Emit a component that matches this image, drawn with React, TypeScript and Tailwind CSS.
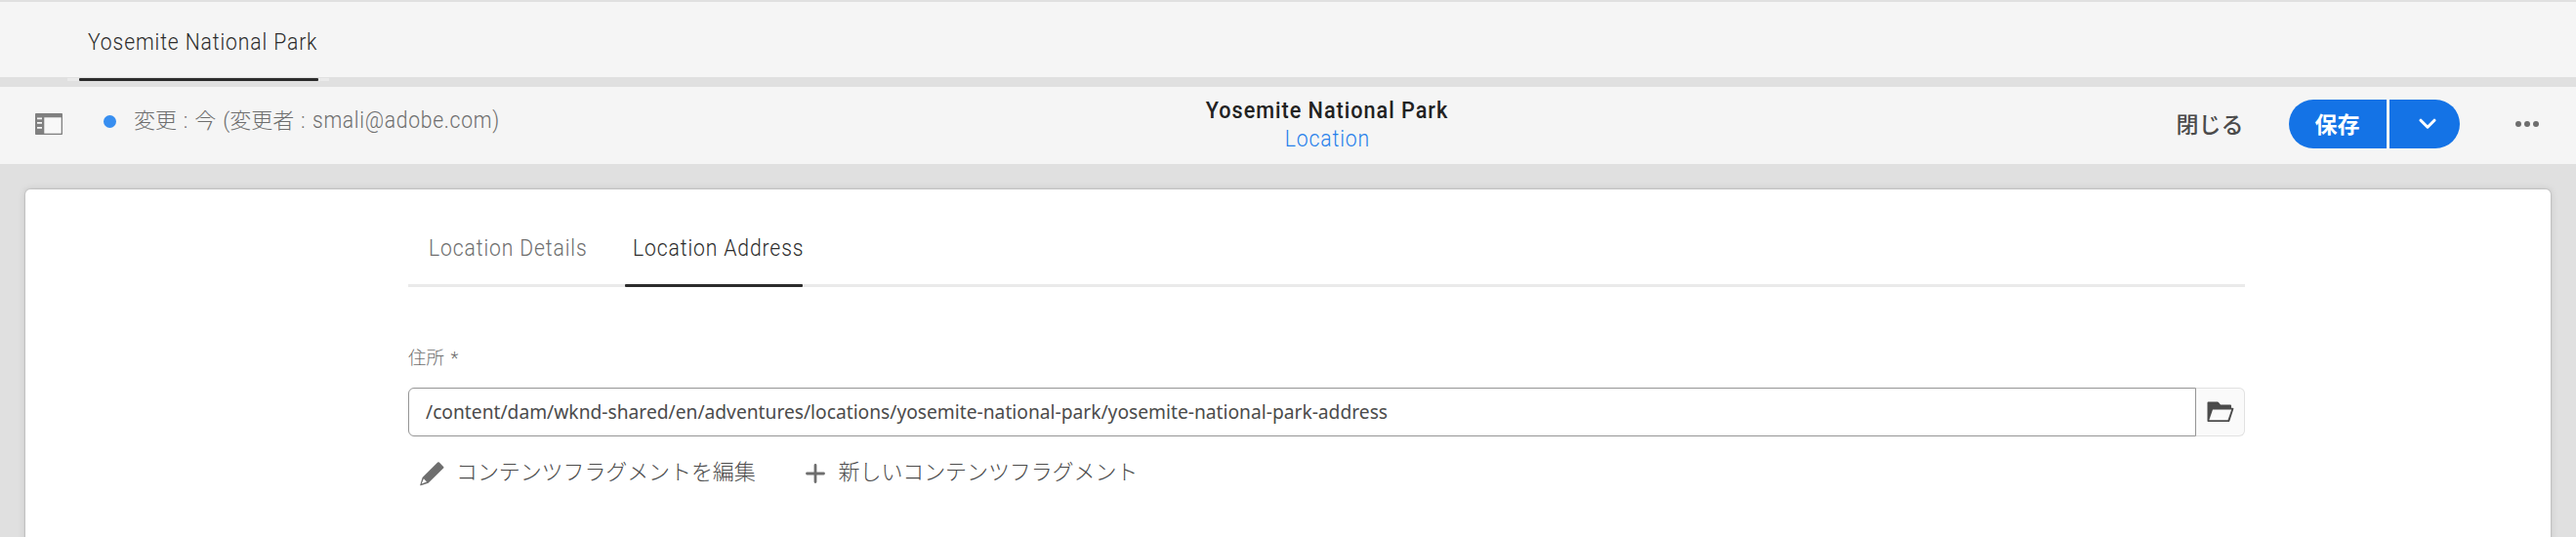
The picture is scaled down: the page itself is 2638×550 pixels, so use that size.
import type { ReactNode } from "react";

const light = "font-['Roboto','Noto_Sans_CJK_JP',sans-serif] font-light whitespace-nowrap";
const condensed = "inline-block origin-left scale-x-[0.88] tracking-[1px]";

function PanelIcon() {
  return (
    <svg width="28" height="22" viewBox="0 0 28 22" className="block">
      <rect x="0" y="0" width="28" height="22" rx="0.8" fill="#808080" />
      <rect x="9.3" y="4.3" width="17.4" height="16.4" fill="#f8f8f8" />
      <path d="M2 5.3h5M2 9.8h5M2 14.8h5" stroke="#f5f5f5" strokeWidth="1.7" />
    </svg>
  );
}

function FolderIcon() {
  return (
    <svg width="28" height="22" viewBox="0 0 28 22" className="block">
      <path
        d="M.5 20.3V1.6Q.5.6 1.5.6h9.3q.8 0 1.3.6l1.9 2.3h10q1 0 1 1v2.300h1.4q1.3 0 .9 1.2l-4 12.2q-.3.9-1.2.9H1.3q-.8 0-.8-.8z"
        fill="#4b4b4b"
      />
      <path d="M6 8.4h19.2l-3.7 10.900H2.300z" fill="#fafafa" />
    </svg>
  );
}

function PencilIcon() {
  return (
    <svg width="25" height="25" viewBox="0 0 25 25" className="block">
      <path
        d="M18.2.6q.8-.8 1.6 0l4.3 4.3q.8.8 0 1.6L8.6 21.7 1 24.3q-.9.2-.7-.7l2.3-7.600zM3.900 17.300l-2.200 5.300 5.300-2.200z"
        fillRule="evenodd"
        fill="#6e6e6e"
      />
    </svg>
  );
}

function PlusIcon() {
  return (
    <svg width="20" height="20" viewBox="0 0 20 20" className="block">
      <path d="M10 1.5v17M1.5 10h17" stroke="#6e6e6e" strokeWidth="2.8" strokeLinecap="round" />
    </svg>
  );
}

function Action({ icon, children }: { icon: ReactNode; children: ReactNode }) {
  return (
    <button className="flex items-center">
      {icon}
      <span className={`${light} text-[22px] leading-[30px] tracking-[-0.1px] text-[#4b4b4b]`}>{children}</span>
    </button>
  );
}

export default function App() {
  return (
    <div className="flex h-[550px] w-[2638px] flex-col overflow-hidden bg-[#e0e0e0]">
      <nav className="mt-[2px] flex h-[81px] shrink-0 flex-col">
        <div className="flex h-[77px] bg-[#f5f5f5] pl-[90px] pt-[24px]">
          <span className={`${light} ${condensed} text-[24px] leading-[34px] text-[#2c2c2c]`}>
            Yosemite National Park
          </span>
        </div>
        <div className="ml-[69px] mt-px flex h-[3px] w-[268px] bg-[#eaeaea] pl-[12px]">
          <div className="h-[3px] w-[245px] rounded-[1px] bg-[#2c2c2c]" />
        </div>
      </nav>

      <header className="mt-[6px] grid h-[79px] shrink-0 grid-cols-3 bg-[#f5f5f5]">
        <div className="flex pl-[36px]">
          <div className="pt-[27px]">
            <PanelIcon />
          </div>
          <div className="ml-[42px] mt-[29px] size-[13px] rounded-full bg-[#378ef0]" />
          <span className={`${light} ml-[18px] mt-[17px] text-[22px] leading-[34px] text-[#6e6e6e] [word-spacing:1.5px]`}>
            変更 : 今 (変更者 :{" "}
            <span className="inline-block origin-left scale-x-[0.88] text-[24px] tracking-[0.8px]">smali@adobe.com)</span>
          </span>
        </div>
        <div className="flex flex-col items-center pl-[79px] pt-[10px]">
          <h1 className="scale-x-[0.9] whitespace-nowrap font-['Roboto',sans-serif] text-[24px] font-medium leading-[29px] tracking-[1.1px] text-[#222]">
            Yosemite National Park
          </h1>
          <span className={`${light} scale-x-[0.88] pl-[2px] text-[24px] leading-[29px] tracking-[1px] text-[#2680eb]`}>Location</span>
        </div>
        <div className="flex justify-end pr-[38px] pt-[13px]">
          <button className="mr-[46px] h-[48px] font-['Noto_Sans_CJK_JP',sans-serif] text-[23px] font-medium text-[#4b4b4b]">
            閉じる
          </button>
          <div className="flex h-[50px] gap-[3px]">
            <button className="h-[50px] w-[100px] rounded-l-full bg-[#1473e6] pb-[2px] font-['Noto_Sans_CJK_JP',sans-serif] text-[23px] font-bold text-white">
              保存
            </button>
            <button className="flex h-[50px] w-[72px] items-center justify-center rounded-r-full bg-[#1473e6] pl-[7px]">
              <svg width="18" height="12" viewBox="0 0 18 12" className="block">
                <path d="M2 2.2l7 7 7-7" fill="none" stroke="#fff" strokeWidth="3" strokeLinecap="round" strokeLinejoin="round" />
              </svg>
            </button>
          </div>
          <button className="ml-[57px] flex h-[50px] items-center gap-[3.2px]">
            <span className="size-[6px] rounded-full bg-[#6e6e6e]" />
            <span className="size-[6px] rounded-full bg-[#6e6e6e]" />
            <span className="size-[6px] rounded-full bg-[#6e6e6e]" />
          </button>
        </div>
      </header>

      <main className="ml-[26px] mt-[26px] h-[400px] w-[2586px] shrink-0 rounded-[5px] bg-white pl-[392px] shadow-[0_0_2px_rgba(0,0,0,0.3),0_0_8px_rgba(0,0,0,0.12)]">
        <div className="w-[1881px]">
          <div className="flex h-[100px] border-b-[3px] border-[#eaeaea] pl-[21px]">
            <div className="w-[201px] pt-[43px]">
              <span className={`${light} ${condensed} text-[24px] leading-[34px] text-[#6e6e6e]`}>Location Details</span>
            </div>
            <div className="flex w-[182px] flex-col justify-between">
              <div className="pl-[8px] pt-[43px]">
                <span className={`${light} ${condensed} text-[24px] leading-[34px] text-[#2c2c2c]`}>Location Address</span>
              </div>
              <div className="-mb-[3px] h-[3px] shrink-0 rounded-[1px] bg-[#2c2c2c]" />
            </div>
          </div>
          <div className={`${light} mt-[59px] text-[18.5px] leading-[28px] text-[#6e6e6e] [word-spacing:2px]`}>住所 *</div>
          <div className="mt-[16px] flex h-[50px]">
            <div className="w-[1831px] whitespace-nowrap rounded-l-[6px] border border-[#959595] pl-[17px] font-['Noto_Sans',sans-serif] text-[20.5px] leading-[46px] text-[#4b4b4b]">
              <span className="inline-block origin-left scale-x-[0.937]">
                /content/dam/wknd-shared/en/adventures/locations/yosemite-national-park/yosemite-national-park-address
              </span>
            </div>
            <button className="flex w-[50px] items-center rounded-r-[6px] border border-l-0 border-[#e1e1e1] bg-[#fafafa] pl-[11px]">
              <FolderIcon />
            </button>
          </div>
          <div className="ml-[12px] mt-[22px] flex items-center gap-[51px]">
            <Action icon={<div className="mr-[12px] mt-[3px]"><PencilIcon /></div>}>コンテンツフラグメントを編集</Action>
            <Action icon={<div className="mr-[14px] mt-[1px]"><PlusIcon /></div>}>新しいコンテンツフラグメント</Action>
          </div>
        </div>
      </main>
    </div>
  );
}
